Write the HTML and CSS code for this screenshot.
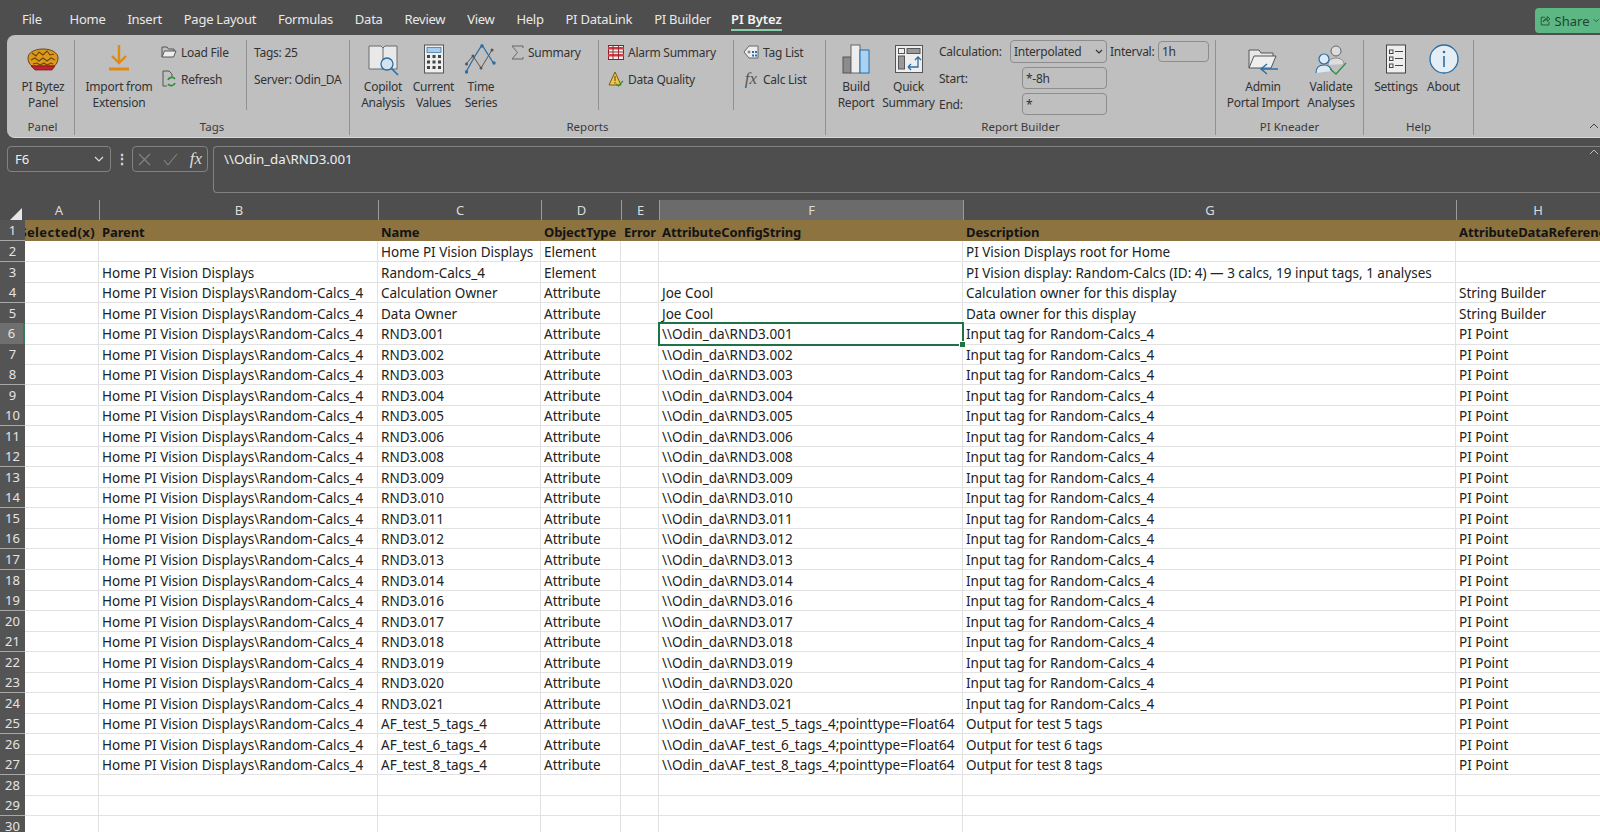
FILE: index.html
```html
<!DOCTYPE html>
<html lang="en">
<head>
<meta charset="utf-8">
<title>PI Bytez</title>
<link rel="stylesheet" href="styles.css">
</head>
<body>
<header class="tabs">
  <span class="tab tab-file">File</span><span class="tab">Home</span><span class="tab">Insert</span><span class="tab">Page Layout</span><span class="tab">Formulas</span><span class="tab">Data</span><span class="tab">Review</span><span class="tab">View</span><span class="tab">Help</span><span class="tab">PI DataLink</span><span class="tab">PI Builder</span><span class="tab tab-active">PI Bytez</span>
  <span class="share"><svg width="13" height="13" viewBox="0 0 13 13" fill="none" stroke="#23442f" stroke-width="1"><path d="M6 2.500H1.500v9.500h9.500V8"/><path d="M4 8c.5-2.500 2.500-4 5-4V1.500l3.200 3.200L9 7.500V5.500C7 5.500 5 6.500 4 8z"/></svg>Share<svg width="8" height="5" viewBox="0 0 8 5" fill="none" stroke="#23442f" stroke-width="1"><path d="M1 1l3 3 3-3"/></svg></span>
</header>

<section class="ribbon">
  <div class="group g-panel">
    <div class="body">
      <div class="big w-panel">
        <svg class="ico" width="32" height="32" viewBox="0 0 32 32"><path d="M1 14c0-5 6-9 15-9s15 4 15 9c0 4-2 7-4 8H5c-2-1-4-4-4-8z" fill="#dc9a1c" stroke="#5a3a08" stroke-width=".9"/><path d="M5 9l4 3 3-4 4 3 4-4 3 4 4-1M4 16l4-2 4 3 4-3 4 3 4-3 4 2M6 20l4-1 3 2 4-2 3 2 4-2 2 1" fill="none" stroke="#6d4408" stroke-width="1.100"/><path d="M4 22h24l-3 4H8z" fill="#c8202a" stroke="#6a1414" stroke-width=".7"/></svg>
        <span class="lbl">PI Bytez<br>Panel</span>
      </div>
    </div>
    <div class="glabel gl-panel">Panel</div>
  </div>

  <div class="group g-tags">
    <div class="body">
      <div class="big w-import">
        <svg class="ico" width="32" height="32" viewBox="0 0 32 32" fill="none" stroke="#e08a12" stroke-width="2.400"><path d="M16 1v18M9 12l7 7 7-7"/><path d="M6 25h20" stroke-width="3"/></svg>
        <span class="lbl">Import from<br>Extension</span>
      </div>
      <div class="stack w-tagcmd">
        <div class="cmd"><svg width="16" height="14" viewBox="0 0 16 14" fill="none" stroke="#555" stroke-width="1"><path d="M1 12V2h5l1.500 2H13v2"/><path d="M1 12l2.500-6H15l-2.500 6z" fill="#eee"/></svg>Load File</div>
        <div class="cmd"><svg width="16" height="18" viewBox="0 0 16 18" fill="none"><path d="M2 1h6l3 3v3M2 1v15h4" stroke="#555"/><path d="M7 10a4 4 0 0 1 7-1M14 13a4 4 0 0 1-7 1" stroke="#2d9138" stroke-width="1.800"/></svg>Refresh</div>
      </div>
      <div class="stack sep-left w-info">
        <div class="cmd">Tags: 25</div>
        <div class="cmd">Server: Odin_DA</div>
      </div>
    </div>
    <div class="glabel">Tags</div>
  </div>

  <div class="group g-reports">
    <div class="body">
      <div class="big w-copilot">
        <svg class="ico" width="32" height="32" viewBox="0 0 32 32" fill="none"><path d="M2 2h12l2 2 2-2h12v23H2z" fill="#e9e9e9" stroke="#6a6a6a" stroke-width="1"/><path d="M16 4v22" stroke="#6a6a6a"/><circle cx="20" cy="20" r="6" fill="#d5e3ef" stroke="#2a6ea5" stroke-width="1.300"/><path d="M24.500 24.500L31 31" stroke="#2a6ea5" stroke-width="1.600"/></svg>
        <span class="lbl">Copilot<br>Analysis</span>
      </div>
      <div class="big w-current">
        <svg class="ico" width="24" height="32" viewBox="0 0 24 32"><rect x="2.500" y="1" width="19" height="28" fill="#eee" stroke="#555" stroke-width="1"/><rect x="5" y="3.500" width="14" height="5" fill="#a9cdea" stroke="#2a6ea5" stroke-width=".7"/><g fill="#444"><rect x="5" y="11" width="3" height="3"/><rect x="10.500" y="11" width="3" height="3"/><rect x="16" y="11" width="3" height="3"/><rect x="5" y="16.500" width="3" height="3"/><rect x="10.500" y="16.500" width="3" height="3"/><rect x="16" y="16.500" width="3" height="3"/><rect x="5" y="22" width="3" height="3"/><rect x="10.500" y="22" width="3" height="3"/><rect x="16" y="22" width="3" height="3"/></g></svg>
        <span class="lbl">Current<br>Values</span>
      </div>
      <div class="big w-time">
        <svg class="ico" width="32" height="32" viewBox="0 0 32 32" fill="none"><path d="M1 20L8 12l8 12L27 6" stroke="#555" stroke-width="1"/><path d="M1 28L10 12 17 1l12 19" stroke="#2a6ea5" stroke-width="1.300"/><g fill="#2a6ea5"><circle cx="1.500" cy="28" r="1.700"/><circle cx="17" cy="2" r="1.700"/><circle cx="29" cy="19" r="1.700"/></g><g fill="#555"><circle cx="8" cy="12" r="1.500"/><circle cx="16" cy="24" r="1.500"/><circle cx="27" cy="6" r="1.500"/><circle cx="1.500" cy="20" r="1.500"/></g></svg>
        <span class="lbl">Time<br>Series</span>
      </div>
      <div class="stack w-sum">
        <div class="cmd"><svg width="13" height="15" viewBox="0 0 13 15" fill="none" stroke="#666" stroke-width="1"><path d="M12 3V1H1l5.500 6.500L1 14h11v-2"/></svg>Summary</div>
      </div>
      <div class="stack sep-left w-alarm">
        <div class="cmd"><svg width="16" height="15" viewBox="0 0 16 15"><rect x=".5" y=".5" width="15" height="14" fill="#eee" stroke="#8d1f26"/><path d="M0 2h16v2.500H0zM0 9h16v2.500H0z" fill="#d33b44"/><path d="M5 0v15M10.500 0v15M0 7h16" stroke="#8d1f26" stroke-width=".9"/></svg>Alarm Summary</div>
        <div class="cmd"><svg width="16" height="16" viewBox="0 0 16 16" fill="none"><path d="M7 1L1 14h12z" fill="#efc64a" stroke="#7a5b10"/><path d="M7 5v5M7 11v1.500" stroke="#5a430c"/><path d="M8 13l2.500 2L15 10" stroke="#2d9138" stroke-width="1.200"/></svg>Data Quality</div>
      </div>
      <div class="stack sep-left w-taglist">
        <div class="cmd"><svg width="16" height="16" viewBox="0 0 16 16" fill="none" stroke="#666"><path d="M1 8l5-6h9v12H6z" fill="#eee"/><circle cx="6" cy="8" r="1"/><g fill="#2a6ea5" stroke="none"><rect x="9" y="7" width="2" height="2"/><rect x="12" y="7" width="2" height="2"/><rect x="9" y="10.500" width="2" height="2"/><rect x="12" y="10.500" width="2" height="2"/></g></svg>Tag List</div>
        <div class="cmd"><i class="fx fx-r">fx</i>Calc List</div>
      </div>
    </div>
    <div class="glabel">Reports</div>
  </div>

  <div class="group g-builder">
    <div class="body">
      <div class="big w-build">
        <svg class="ico" width="28" height="32" viewBox="0 0 28 32"><rect x="1" y="13" width="8" height="16" fill="#8c8c8c" stroke="#555"/><rect x="9" y="1" width="9" height="28" fill="#eee" stroke="#666"/><rect x="18" y="6" width="9" height="23" fill="#a9d3f0" stroke="#2a6ea5"/></svg>
        <span class="lbl">Build<br>Report</span>
      </div>
      <div class="big w-quick">
        <svg class="ico" width="30" height="32" viewBox="0 0 30 32" fill="none"><rect x="1.500" y="1.500" width="27" height="27" fill="#eee" stroke="#555"/><rect x="4.500" y="4.500" width="6" height="5" stroke="#555"/><rect x="13" y="4.500" width="13" height="5" fill="#999" stroke="#555"/><rect x="4.500" y="12" width="6" height="13" fill="#999" stroke="#555"/><path d="M14 23h10V13M21 16l3-3 3 3M14 23l3-3M14 23l3 3" stroke="#2a6ea5" stroke-width="1.300"/></svg>
        <span class="lbl">Quick<br>Summary</span>
      </div>
      <div class="form">
        <div class="frow f1"><span class="flabel fl-calc">Calculation:</span><span class="field combo">Interpolated<svg width="8" height="5" viewBox="0 0 8 5" fill="none" stroke="#333" stroke-width="1.200"><path d="M1 1l3 3 3-3"/></svg></span><span class="flabel fl-int">Interval:</span><span class="field fi-int">1h</span></div>
        <div class="frow f2"><span class="flabel fl-start">Start:</span><span class="field fi-date">*-8h</span></div>
        <div class="frow f2"><span class="flabel fl-start">End:</span><span class="field fi-date">*</span></div>
      </div>
    </div>
    <div class="glabel">Report Builder</div>
  </div>

  <div class="group g-kneader">
    <div class="body">
      <div class="big w-admin">
        <svg class="ico" width="32" height="32" viewBox="0 0 32 32" fill="none"><path d="M2 24V6h10l2 3h12v3" stroke="#555" fill="#e8e8e8"/><path d="M2 24l5-12h22l-5 12z" fill="#eee" stroke="#555"/><path d="M31 25H15M20 20l-6 5 6 5" stroke="#2a6ea5" stroke-width="1.400"/></svg>
        <span class="lbl">Admin<br>Portal Import</span>
      </div>
      <div class="big w-validate">
        <svg class="ico" width="32" height="32" viewBox="0 0 32 32" fill="none"><circle cx="21" cy="7" r="5" fill="#ddd" stroke="#666"/><path d="M13 21c0-5 4-7 8-7s8 2 8 6" fill="#ddd" stroke="#888"/><circle cx="9" cy="15" r="5" fill="#ddeaf5" stroke="#2a6ea5" stroke-width="1.200"/><path d="M1 29c0-5 3-8 8-8s7 3 8 6" fill="#ddeaf5" stroke="#2a6ea5" stroke-width="1.200"/><path d="M15 25l6 5 10-11" stroke="#3c8c46" stroke-width="1.300"/></svg>
        <span class="lbl">Validate<br>Analyses</span>
      </div>
    </div>
    <div class="glabel">PI Kneader</div>
  </div>

  <div class="group g-help">
    <div class="body">
      <div class="big w-settings">
        <svg class="ico" width="24" height="32" viewBox="0 0 24 32" fill="none" stroke="#444"><rect x="2.500" y="1" width="19" height="28" fill="#eee"/><rect x="5.500" y="6" width="3.500" height="3.500"/><rect x="5.500" y="13" width="3.500" height="3.500"/><rect x="5.500" y="20" width="3.500" height="3.500"/><path d="M11 7.500h8M11 14.500h8M11 21.500h8"/></svg>
        <span class="lbl">Settings</span>
      </div>
      <div class="big w-about">
        <svg class="ico" width="30" height="32" viewBox="0 0 30 32" fill="none"><circle cx="15" cy="15" r="14" fill="#e6eef5" stroke="#2a6ea5" stroke-width="1.300"/><path d="M15 12v11" stroke="#2a6ea5" stroke-width="1.600"/><circle cx="15" cy="8" r="1.300" fill="#2a6ea5"/></svg>
        <span class="lbl">About</span>
      </div>
    </div>
    <div class="glabel">Help</div>
  </div>
  <svg class="collapse" width="10" height="6" viewBox="0 0 10 6" fill="none" stroke="#444" stroke-width="1"><path d="M1 5l4-4 4 4"/></svg>
</section>

<section class="fbar">
  <div class="namebox">F6<svg width="10" height="6" viewBox="0 0 10 6" fill="none" stroke="#ddd" stroke-width="1.200"><path d="M1 1l4 4 4-4"/></svg></div>
  <div class="dots">&#8942;</div>
  <div class="fxbox">
    <svg width="13" height="13" viewBox="0 0 13 13" fill="none" stroke="#858585" stroke-width="1.100"><path d="M1 1l11 11M12 1L1 12"/></svg>
    <svg width="15" height="13" viewBox="0 0 15 13" fill="none" stroke="#858585" stroke-width="1.100"><path d="M1 7l4 5L14 1"/></svg>
    <i class="fx fx-w">fx</i>
  </div>
  <div class="formula">\\Odin_da\RND3.001</div>
  <svg class="expand" width="10" height="6" viewBox="0 0 10 6" fill="none" stroke="#bbb" stroke-width="1"><path d="M1 5l4-4 4 4"/></svg>
</section>

<main class="sheet">
  <div class="row colhead"><div class="corner"><svg width="13" height="13" viewBox="0 0 13 13"><path d="M13 0v13H0z" fill="#e8e8e8"/></svg></div><div class="ch ch-a">A</div><div class="ch">B</div><div class="ch">C</div><div class="ch">D</div><div class="ch">E</div><div class="ch ch-sel">F</div><div class="ch">G</div><div class="ch">H</div></div>
  <div class="row head"><div class="rh">1</div><div class="c ca">Selected(x)</div><div class="c">Parent</div><div class="c">Name</div><div class="c">ObjectType</div><div class="c">Error</div><div class="c">AttributeConfigString</div><div class="c">Description</div><div class="c">AttributeDataReferencePlugIn</div></div>
  <div class="row"><div class="rh">2</div><div class="c"></div><div class="c"></div><div class="c">Home PI Vision Displays</div><div class="c">Element</div><div class="c"></div><div class="c"></div><div class="c">PI Vision Displays root for Home</div><div class="c"></div></div>
  <div class="row"><div class="rh">3</div><div class="c"></div><div class="c">Home PI Vision Displays</div><div class="c">Random-Calcs_4</div><div class="c">Element</div><div class="c"></div><div class="c"></div><div class="c">PI Vision display: Random-Calcs (ID: 4) — 3 calcs, 19 input tags, 1 analyses</div><div class="c"></div></div>
  <div class="row"><div class="rh">4</div><div class="c"></div><div class="c">Home PI Vision Displays\Random-Calcs_4</div><div class="c">Calculation Owner</div><div class="c">Attribute</div><div class="c"></div><div class="c">Joe Cool</div><div class="c">Calculation owner for this display</div><div class="c">String Builder</div></div>
  <div class="row"><div class="rh">5</div><div class="c"></div><div class="c">Home PI Vision Displays\Random-Calcs_4</div><div class="c">Data Owner</div><div class="c">Attribute</div><div class="c"></div><div class="c">Joe Cool</div><div class="c">Data owner for this display</div><div class="c">String Builder</div></div>
  <div class="row"><div class="rh rh-sel">6</div><div class="c"></div><div class="c">Home PI Vision Displays\Random-Calcs_4</div><div class="c">RND3.001</div><div class="c">Attribute</div><div class="c"></div><div class="c sel">\\Odin_da\RND3.001<span class="handle"></span></div><div class="c">Input tag for Random-Calcs_4</div><div class="c">PI Point</div></div>
  <div class="row"><div class="rh">7</div><div class="c"></div><div class="c">Home PI Vision Displays\Random-Calcs_4</div><div class="c">RND3.002</div><div class="c">Attribute</div><div class="c"></div><div class="c">\\Odin_da\RND3.002</div><div class="c">Input tag for Random-Calcs_4</div><div class="c">PI Point</div></div>
  <div class="row"><div class="rh">8</div><div class="c"></div><div class="c">Home PI Vision Displays\Random-Calcs_4</div><div class="c">RND3.003</div><div class="c">Attribute</div><div class="c"></div><div class="c">\\Odin_da\RND3.003</div><div class="c">Input tag for Random-Calcs_4</div><div class="c">PI Point</div></div>
  <div class="row"><div class="rh">9</div><div class="c"></div><div class="c">Home PI Vision Displays\Random-Calcs_4</div><div class="c">RND3.004</div><div class="c">Attribute</div><div class="c"></div><div class="c">\\Odin_da\RND3.004</div><div class="c">Input tag for Random-Calcs_4</div><div class="c">PI Point</div></div>
  <div class="row"><div class="rh">10</div><div class="c"></div><div class="c">Home PI Vision Displays\Random-Calcs_4</div><div class="c">RND3.005</div><div class="c">Attribute</div><div class="c"></div><div class="c">\\Odin_da\RND3.005</div><div class="c">Input tag for Random-Calcs_4</div><div class="c">PI Point</div></div>
  <div class="row"><div class="rh">11</div><div class="c"></div><div class="c">Home PI Vision Displays\Random-Calcs_4</div><div class="c">RND3.006</div><div class="c">Attribute</div><div class="c"></div><div class="c">\\Odin_da\RND3.006</div><div class="c">Input tag for Random-Calcs_4</div><div class="c">PI Point</div></div>
  <div class="row"><div class="rh">12</div><div class="c"></div><div class="c">Home PI Vision Displays\Random-Calcs_4</div><div class="c">RND3.008</div><div class="c">Attribute</div><div class="c"></div><div class="c">\\Odin_da\RND3.008</div><div class="c">Input tag for Random-Calcs_4</div><div class="c">PI Point</div></div>
  <div class="row"><div class="rh">13</div><div class="c"></div><div class="c">Home PI Vision Displays\Random-Calcs_4</div><div class="c">RND3.009</div><div class="c">Attribute</div><div class="c"></div><div class="c">\\Odin_da\RND3.009</div><div class="c">Input tag for Random-Calcs_4</div><div class="c">PI Point</div></div>
  <div class="row"><div class="rh">14</div><div class="c"></div><div class="c">Home PI Vision Displays\Random-Calcs_4</div><div class="c">RND3.010</div><div class="c">Attribute</div><div class="c"></div><div class="c">\\Odin_da\RND3.010</div><div class="c">Input tag for Random-Calcs_4</div><div class="c">PI Point</div></div>
  <div class="row"><div class="rh">15</div><div class="c"></div><div class="c">Home PI Vision Displays\Random-Calcs_4</div><div class="c">RND3.011</div><div class="c">Attribute</div><div class="c"></div><div class="c">\\Odin_da\RND3.011</div><div class="c">Input tag for Random-Calcs_4</div><div class="c">PI Point</div></div>
  <div class="row"><div class="rh">16</div><div class="c"></div><div class="c">Home PI Vision Displays\Random-Calcs_4</div><div class="c">RND3.012</div><div class="c">Attribute</div><div class="c"></div><div class="c">\\Odin_da\RND3.012</div><div class="c">Input tag for Random-Calcs_4</div><div class="c">PI Point</div></div>
  <div class="row"><div class="rh">17</div><div class="c"></div><div class="c">Home PI Vision Displays\Random-Calcs_4</div><div class="c">RND3.013</div><div class="c">Attribute</div><div class="c"></div><div class="c">\\Odin_da\RND3.013</div><div class="c">Input tag for Random-Calcs_4</div><div class="c">PI Point</div></div>
  <div class="row"><div class="rh">18</div><div class="c"></div><div class="c">Home PI Vision Displays\Random-Calcs_4</div><div class="c">RND3.014</div><div class="c">Attribute</div><div class="c"></div><div class="c">\\Odin_da\RND3.014</div><div class="c">Input tag for Random-Calcs_4</div><div class="c">PI Point</div></div>
  <div class="row"><div class="rh">19</div><div class="c"></div><div class="c">Home PI Vision Displays\Random-Calcs_4</div><div class="c">RND3.016</div><div class="c">Attribute</div><div class="c"></div><div class="c">\\Odin_da\RND3.016</div><div class="c">Input tag for Random-Calcs_4</div><div class="c">PI Point</div></div>
  <div class="row"><div class="rh">20</div><div class="c"></div><div class="c">Home PI Vision Displays\Random-Calcs_4</div><div class="c">RND3.017</div><div class="c">Attribute</div><div class="c"></div><div class="c">\\Odin_da\RND3.017</div><div class="c">Input tag for Random-Calcs_4</div><div class="c">PI Point</div></div>
  <div class="row"><div class="rh">21</div><div class="c"></div><div class="c">Home PI Vision Displays\Random-Calcs_4</div><div class="c">RND3.018</div><div class="c">Attribute</div><div class="c"></div><div class="c">\\Odin_da\RND3.018</div><div class="c">Input tag for Random-Calcs_4</div><div class="c">PI Point</div></div>
  <div class="row"><div class="rh">22</div><div class="c"></div><div class="c">Home PI Vision Displays\Random-Calcs_4</div><div class="c">RND3.019</div><div class="c">Attribute</div><div class="c"></div><div class="c">\\Odin_da\RND3.019</div><div class="c">Input tag for Random-Calcs_4</div><div class="c">PI Point</div></div>
  <div class="row"><div class="rh">23</div><div class="c"></div><div class="c">Home PI Vision Displays\Random-Calcs_4</div><div class="c">RND3.020</div><div class="c">Attribute</div><div class="c"></div><div class="c">\\Odin_da\RND3.020</div><div class="c">Input tag for Random-Calcs_4</div><div class="c">PI Point</div></div>
  <div class="row"><div class="rh">24</div><div class="c"></div><div class="c">Home PI Vision Displays\Random-Calcs_4</div><div class="c">RND3.021</div><div class="c">Attribute</div><div class="c"></div><div class="c">\\Odin_da\RND3.021</div><div class="c">Input tag for Random-Calcs_4</div><div class="c">PI Point</div></div>
  <div class="row"><div class="rh">25</div><div class="c"></div><div class="c">Home PI Vision Displays\Random-Calcs_4</div><div class="c">AF_test_5_tags_4</div><div class="c">Attribute</div><div class="c"></div><div class="c">\\Odin_da\AF_test_5_tags_4;pointtype=Float64</div><div class="c">Output for test 5 tags</div><div class="c">PI Point</div></div>
  <div class="row"><div class="rh">26</div><div class="c"></div><div class="c">Home PI Vision Displays\Random-Calcs_4</div><div class="c">AF_test_6_tags_4</div><div class="c">Attribute</div><div class="c"></div><div class="c">\\Odin_da\AF_test_6_tags_4;pointtype=Float64</div><div class="c">Output for test 6 tags</div><div class="c">PI Point</div></div>
  <div class="row"><div class="rh">27</div><div class="c"></div><div class="c">Home PI Vision Displays\Random-Calcs_4</div><div class="c">AF_test_8_tags_4</div><div class="c">Attribute</div><div class="c"></div><div class="c">\\Odin_da\AF_test_8_tags_4;pointtype=Float64</div><div class="c">Output for test 8 tags</div><div class="c">PI Point</div></div>
  <div class="row"><div class="rh">28</div><div class="c"></div><div class="c"></div><div class="c"></div><div class="c"></div><div class="c"></div><div class="c"></div><div class="c"></div><div class="c"></div></div>
  <div class="row"><div class="rh">29</div><div class="c"></div><div class="c"></div><div class="c"></div><div class="c"></div><div class="c"></div><div class="c"></div><div class="c"></div><div class="c"></div></div>
  <div class="row"><div class="rh">30</div><div class="c"></div><div class="c"></div><div class="c"></div><div class="c"></div><div class="c"></div><div class="c"></div><div class="c"></div><div class="c"></div></div>
</main>
</body>
</html>
```

FILE: styles.css
```css
* { box-sizing: border-box; }
html, body { margin: 0; height: 832px; overflow: hidden; }
body { width: 1600px; background: #4e4e4e; font-family: "Noto Sans", "Open Sans", sans-serif; color: #333; }

/* tab strip */
.tabs { height: 35px; display: flex; align-items: center; gap: 21.800px; padding: 3px 0 0 22px; position: relative; }
.tab { font-size: 13px; letter-spacing: -.25px; line-height: 18px; color: #e9e9e9; white-space: nowrap; }
.tab-file { margin-right: 6px; }
.tab-active { font-weight: 600; position: relative; color: #f2f2f2; margin-left: -2px; letter-spacing: 0; }
.tab-active::after { content: ""; position: absolute; left: 0; right: 0; bottom: -3px; height: 2px; background: #86cfa8; }
.share { margin-left: auto; align-self: flex-start; margin-top: 5px; width: 65px; height: 25px; background: #5cb784; border-radius: 4px 0 0 4px; color: #23442f; font-size: 13px; display: flex; align-items: center; gap: 4px; padding-left: 5px; flex: none; }

/* ribbon */
.ribbon { position: relative; height: 103px; margin-left: 7px; background: #bfbfbf; border-radius: 8px 0 0 8px; display: flex; padding-top: 5px; border-bottom: 1px solid #d6d6d6; }
.group { position: relative; display: flex; flex-direction: column; height: 95px; border-right: 1px solid #919191; flex: none; }
.body { display: flex; height: 74px; flex: none; }
.glabel { font-size: 11.500px; line-height: 16px; margin-top: 5px; text-align: center; color: #3a3a3a; flex: none; }
.gl-panel { padding-left: 4px; }
.g-panel { width: 68px; }
.g-tags { width: 275px; }
.g-reports { width: 476px; }
.g-builder { width: 390px; }
.g-kneader { width: 148px; }
.g-help { width: 110px; }

.big { display: flex; flex-direction: column; align-items: center; flex: none; padding-top: 4px; }
.ico { display: block; height: 32px; margin-bottom: 3px; flex: none; }
.lbl { font-size: 12px; letter-spacing: -.25px; line-height: 16px; text-align: center; white-space: nowrap; color: #333; }

.w-panel { width: 64px; margin-left: 4px; }
.w-import { width: 78px; margin: 0 3px 0 5px; }
.w-tagcmd { width: 85px; }
.w-info { width: 103px; padding-left: 7px; }
.w-copilot { width: 50px; margin-left: 8px; }
.w-current { width: 51px; }
.w-time { width: 44px; }
.w-sum { width: 95px; padding-left: 8px; }
.w-alarm { width: 135px; padding-left: 9px; }
.w-taglist { padding-left: 9px; }
.w-build { width: 50px; margin-left: 5px; }
.w-quick { width: 55px; }
.w-admin { width: 76px; margin-left: 9px; }
.w-validate { width: 60px; }
.w-settings { width: 52px; margin-left: 6px; }
.w-about { width: 43px; }

.stack { display: flex; flex-direction: column; gap: 9px; padding-top: 3px; height: 70px; flex: none; }
.sep-left { border-left: 1px solid #919191; }
.cmd { display: flex; align-items: center; gap: 4px; height: 18px; font-size: 12px; letter-spacing: -.25px; white-space: nowrap; }

.fx { font-family: "Liberation Serif", serif; font-style: italic; font-size: 17px; line-height: 18px; letter-spacing: 0; }
.fx-r { color: #555; width: 16px; text-align: center; }
.fx-w { color: #ddd; }

.form { margin-left: 3px; display: flex; flex-direction: column; gap: 4px; font-size: 12px; letter-spacing: -.25px; }
.frow { display: flex; align-items: center; flex: none; }
.f1 { height: 23px; }
.f2 { height: 22px; }
.flabel { flex: none; white-space: nowrap; }
.fl-calc { width: 71px; }
.fl-int { width: 51px; padding-left: 3px; }
.fl-start { width: 83px; }
.field { flex: none; height: 100%; border: 1px solid #8d8d8d; border-radius: 4px; padding: 0 3px; display: flex; align-items: center; background: #bfbfbf; }
.combo { width: 97px; justify-content: space-between; }
.fi-int { width: 51px; height: 21px; }
.fi-date { width: 85px; }
.collapse { position: absolute; right: 1px; bottom: 8px; }

/* formula bar */
.fbar { position: relative; height: 62px; display: flex; align-items: flex-start; padding: 8px 0 0 7px; }
.namebox { width: 104px; height: 26px; border: 1px solid #828282; border-radius: 4px; padding: 0 6px 0 7px; display: flex; align-items: center; justify-content: space-between; color: #eee; font-size: 13px; }
.dots { width: 21px; height: 26px; line-height: 25px; text-align: center; color: #ddd; font-size: 14px; font-weight: 700; }
.fxbox { width: 76px; height: 26px; border: 1px solid #828282; border-radius: 4px; display: flex; align-items: center; justify-content: space-between; padding: 0 5px; }
.formula { flex: 1; height: 47px; margin-left: 5px; border: 1px solid #828282; border-right: 0; border-radius: 4px 0 0 4px; color: #eee; font-size: 13.300px; line-height: 25px; padding-left: 10px; }
.expand { position: absolute; right: 1px; top: 11px; }

/* sheet */
.sheet { background: #fff; }
.row { display: grid; grid-template-columns: 25px 74px 279px 163px 80px 38px 304px 493px 163px; height: 20.540px; }
.colhead { height: 20px; background: #4e4e4e; }
.corner { display: flex; align-items: flex-end; justify-content: flex-end; padding: 0 3px 1px 0; }
.ch { text-align: center; color: #dcdcdc; font-size: 13px; line-height: 20px; border-left: 1px solid #9a9a9a; }
.ch-a { padding-right: 6px; border-left: 0; }
.ch-sel { background: #6b6b6b; border-bottom: 2px solid #2f7d55; }
.rh { background: #545454; color: #e4e4e4; font-size: 13px; line-height: 20px; text-align: center; border-bottom: 1px solid #a8a8a8; }
.rh-sel { background: #6f6f6f; border-right: 2px solid #2f7d55; }
.c { position: relative; padding: 1px 3px 0; font-size: 13.500px; line-height: 20px; color: #222; white-space: nowrap; overflow: hidden; border-right: 1px solid #e2e2e2; border-bottom: 1px solid #e2e2e2; }
.head { height: 21px; }
.head .c { background: #8c7340; font-weight: 700; font-size: 13px; letter-spacing: -.1px; padding-top: 2px; color: #141414; border-color: #8c7340; }
.head .ca { display: flex; justify-content: flex-end; padding-right: 3px; letter-spacing: .4px; }
.sel { overflow: visible; z-index: 1; outline: 2px solid #1f7246; outline-offset: -1px; }
.handle { position: absolute; right: -4px; bottom: -4px; width: 7px; height: 7px; background: #1f7246; border: 1px solid #fff; }
```
